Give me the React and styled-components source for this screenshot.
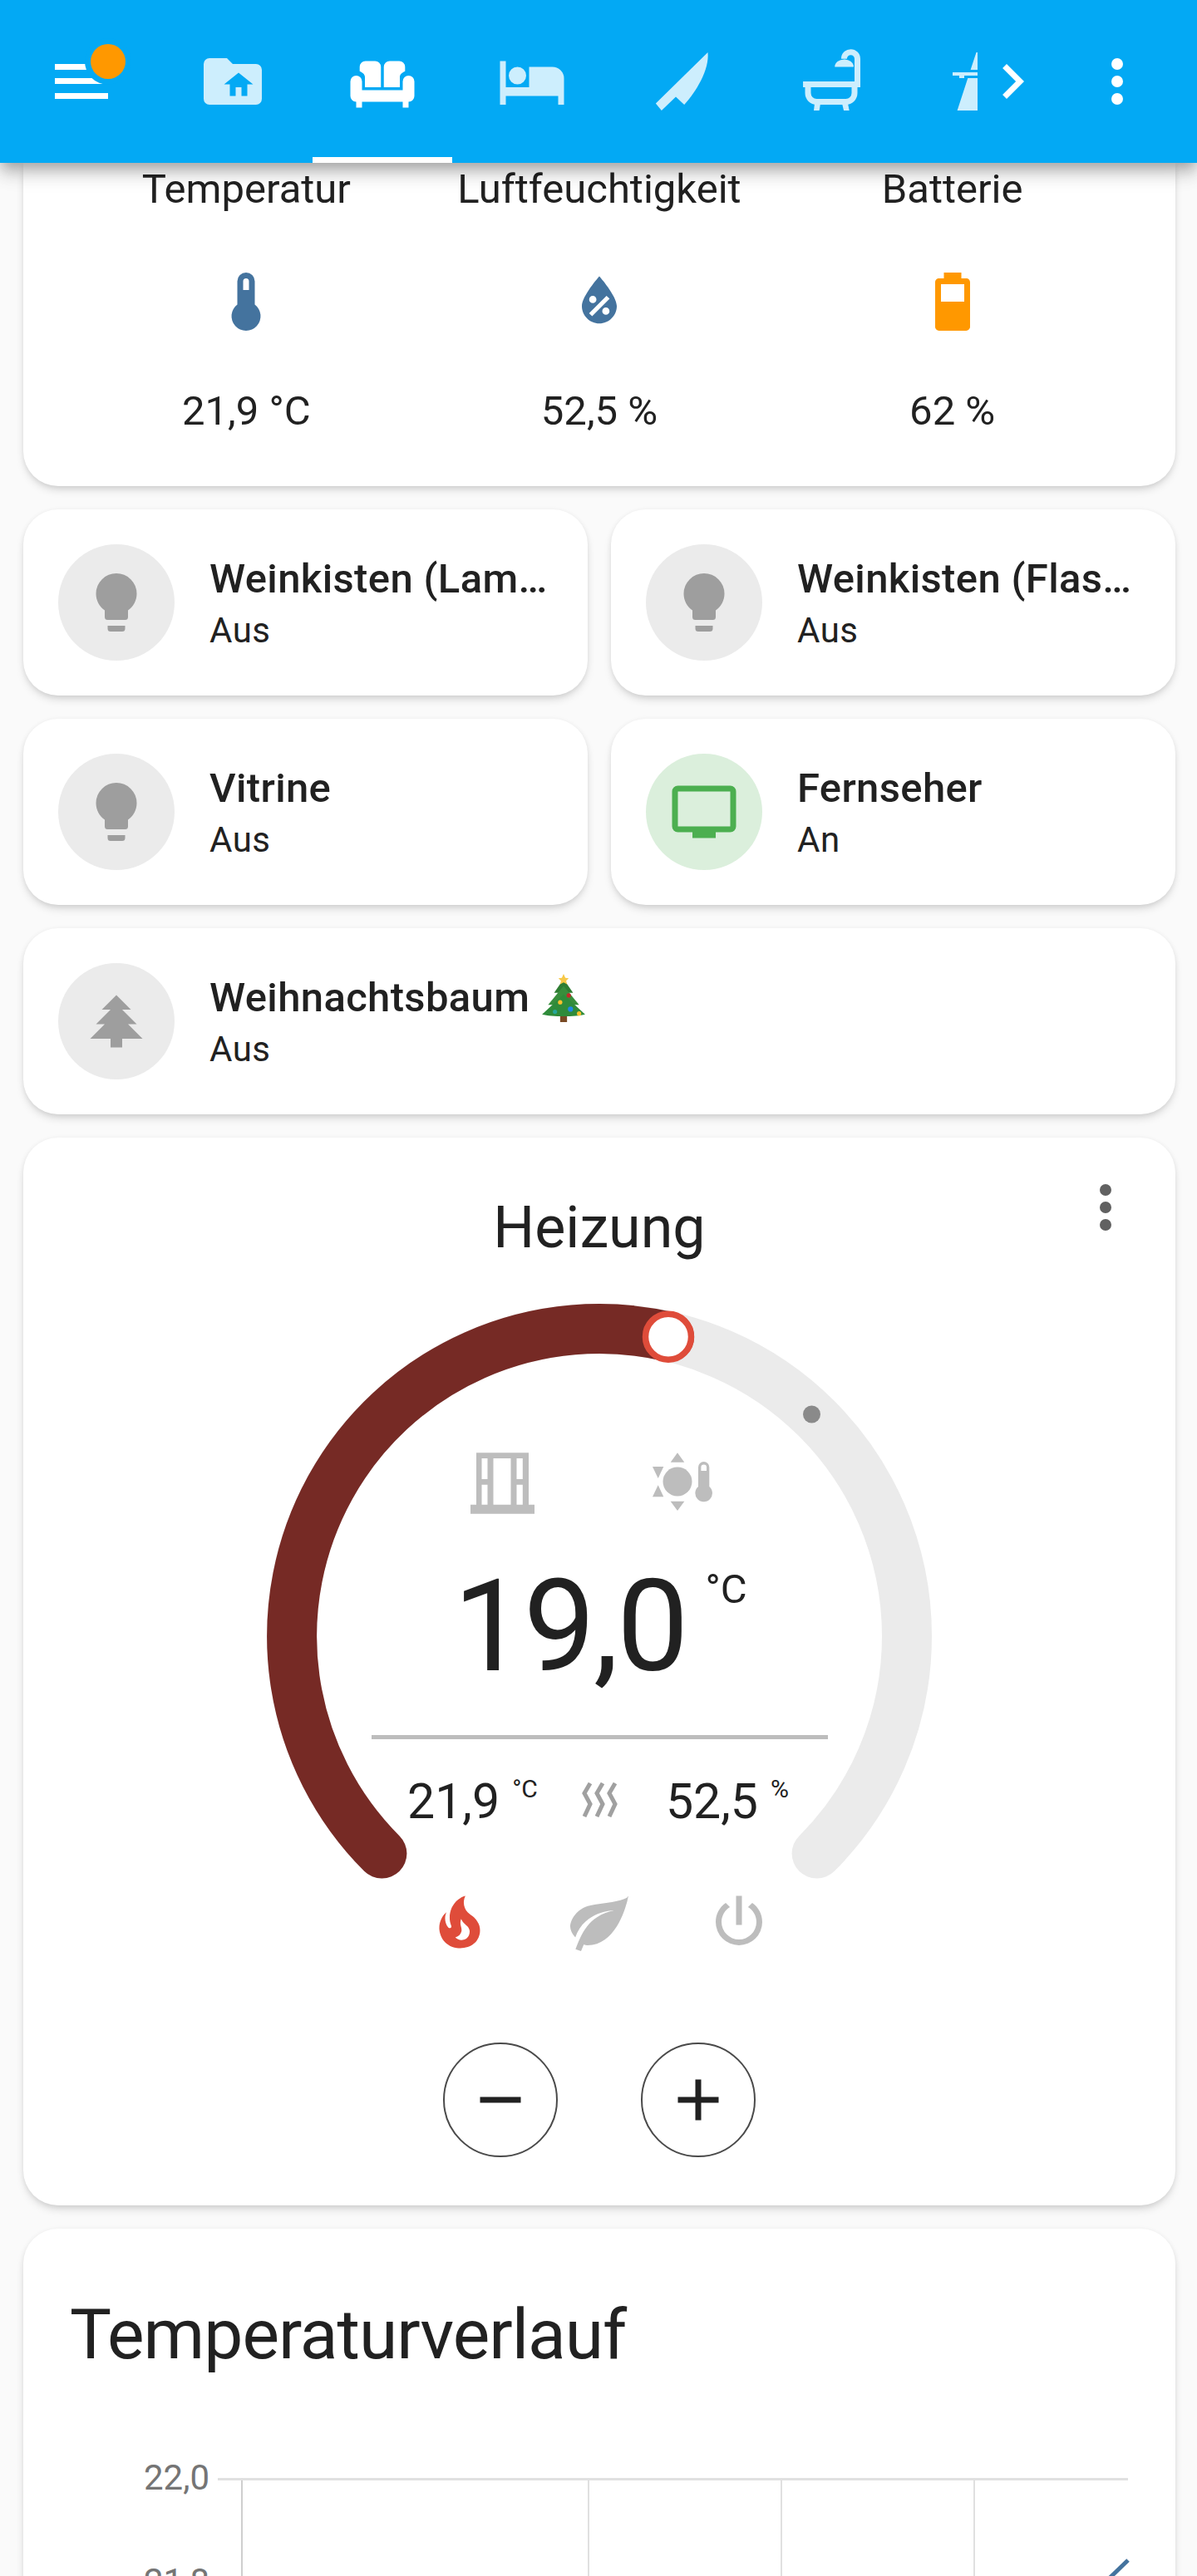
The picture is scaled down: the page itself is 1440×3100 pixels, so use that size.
import React from 'react'
import styled, { createGlobalStyle } from 'styled-components'

const Global = createGlobalStyle`
  html, body {
    margin: 0;
    padding: 0;
    background: #fafafa;
    font-family: Roboto, "Liberation Sans", sans-serif;
    color: #212121;
  }
  * { box-sizing: border-box; }
`

const Page = styled.div`
  width: 1440px;
  height: 3100px;
  overflow: hidden;
  background: #fafafa;
`

const Header = styled.header`
  position: relative;
  z-index: 2;
  display: flex;
  align-items: center;
  height: 196px;
  background: #03a9f4;
  box-shadow: 0 7px 14px -3.5px rgba(0,0,0,.2), 0 14px 17.5px rgba(0,0,0,.14), 0 3.5px 35px rgba(0,0,0,.12);
`

const MenuButton = styled.div`
  width: 190px;
  padding-left: 56px;
  display: flex;
`

const Tabs = styled.nav`
  display: flex;
  width: 986px;
  height: 196px;
  overflow: hidden;
`

const Tab = styled.div`
  position: relative;
  flex: 0 0 180px;
  display: flex;
  align-items: center;
  justify-content: center;
  color: ${p => (p.$active ? '#fff' : '#cdeefd')};
  ${p => p.$active && `
    &::after {
      content: '';
      position: absolute;
      left: 6px;
      right: 6px;
      bottom: 0;
      height: 7px;
      background: #fff;
    }
  `}
`

const Scroll = styled.div`
  display: flex;
  color: #fff;
`

const HeaderDots = styled.div`
  display: flex;
  margin-left: 41.5px;
  color: #fff;
`

const Icon = styled.svg`
  display: block;
  flex: none;
  width: ${p => p.$size || 84}px;
  height: ${p => p.$size || 84}px;
  fill: currentColor;
  color: ${p => p.$color || 'inherit'};
  overflow: visible;
`

const Main = styled.main`
  display: flex;
  flex-direction: column;
  gap: 28px;
  padding: 0 26px 0 28px;
`

const Card = styled.section`
  position: relative;
  background: #fff;
  border-radius: 42px;
  box-shadow: 0 6px 12px -3px rgba(0,0,0,.18), 0 1px 6px rgba(0,0,0,.06);
`

const GlanceCard = styled(Card)`
  display: grid;
  grid-template-columns: repeat(3, 1fr);
  padding: 7px 56px 66px;
  border-radius: 0 0 42px 42px;
`

const GlanceItem = styled.div`
  display: flex;
  flex-direction: column;
  align-items: center;
  font-size: 49px;
  line-height: 49px;
`

const GlanceIcon = styled.div`
  margin: 69px 0 65px;
`

const TileGrid = styled.div`
  display: grid;
  grid-template-columns: 1fr 1fr;
  gap: 28px;
`

const Tile = styled(Card)`
  display: flex;
  align-items: center;
  gap: 42px;
  height: 224px;
  padding: 0 42px;
  min-width: 0;
  grid-column: ${p => (p.$wide ? '1 / -1' : 'auto')};
`

const Shape = styled.div`
  flex: none;
  width: 140px;
  height: 140px;
  border-radius: 50%;
  display: flex;
  align-items: center;
  justify-content: center;
  background: ${p => (p.$on ? '#dbefdc' : '#ebebeb')};
  color: ${p => (p.$on ? '#4caf50' : '#9e9e9e')};
`

const TileText = styled.div`
  min-width: 0;
  flex: 1;
`

const TileName = styled.div`
  font-size: 49px;
  font-weight: 500;
  line-height: 68px;
  letter-spacing: .35px;
  white-space: nowrap;
  overflow: hidden;
  text-overflow: ellipsis;
`

const Emoji = styled.svg`
  display: inline-block;
  width: 56px;
  height: 58px;
  margin-left: 13px;
  vertical-align: -13px;
`

const TileState = styled.div`
  font-size: 42px;
  line-height: 56px;
  letter-spacing: .5px;
`

const ThermostatCard = styled(Card)`
  display: flex;
  flex-direction: column;
  align-items: center;
  padding: 66px 0 58px;
`

const CardMenu = styled.div`
  position: absolute;
  top: 42px;
  right: 42px;
  color: #616161;
`

const ThermostatTitle = styled.h2`
  margin: 0 0 50px;
  font-size: 70px;
  font-weight: 400;
  line-height: 84px;
`

const Dial = styled.div`
  position: relative;
  width: 800px;
  height: 691px;
`

const Ring = styled.svg`
  display: block;
  width: 800px;
  height: 691px;
  overflow: visible;
`

const DialCenter = styled.div`
  position: absolute;
  inset: 0;
  display: flex;
  flex-direction: column;
  align-items: center;
  padding-top: 174px;
`

const DialIcons = styled.div`
  display: flex;
  gap: 133px;
  padding-right: 18px;
  color: #bdbdbd;
`

const BigTemp = styled.div`
  display: flex;
  margin-top: 54px;
  padding-left: 2px;
  font-size: 154px;
  line-height: 154px;
  letter-spacing: -2.2px;
`

const BigUnit = styled.span`
  margin: 7px 0 0 22px;
  font-size: 49px;
  line-height: 49px;
  letter-spacing: 0;
`

const Divider = styled.div`
  width: 549px;
  height: 5px;
  margin-top: 53px;
  background: #bdbdbd;
`

const Readings = styled.div`
  display: flex;
  align-items: flex-start;
  gap: 54px;
  margin-top: 45px;
  padding-right: 3px;
`

const Reading = styled.div`
  display: flex;
  font-size: 59px;
  line-height: 59px;
`

const ReadingUnit = styled.span`
  margin: 0 0 0 15px;
  font-size: 30px;
  line-height: 30px;
`

const HeatWave = styled.svg`
  display: block;
  width: 46px;
  height: 42px;
  margin: 7px 2px 0 -2px;
  fill: none;
  stroke: #a0a0a0;
  stroke-width: 5;
`

const Modes = styled.div`
  display: flex;
  margin-top: 11px;
`

const Mode = styled.div`
  width: 168px;
  display: flex;
  justify-content: center;
  color: ${p => (p.$active ? '#df4c3a' : '#bdbdbd')};
`

const Stepper = styled.div`
  display: flex;
  gap: 100px;
  margin-top: 103px;
`

const StepButton = styled.div`
  width: 138px;
  height: 138px;
  border-radius: 50%;
  border: 2.5px solid #4a4a4a;
  display: flex;
  align-items: center;
  justify-content: center;
  color: #212121;
`

const GraphCard = styled(Card)`
  height: 700px;
  padding-top: 86px;
`

const GraphTitle = styled.h2`
  margin: 0 0 0 56px;
  font-size: 84px;
  font-weight: 400;
  line-height: 84px;
  letter-spacing: -1px;
`

const Chart = styled.svg`
  display: block;
  width: 1384px;
  height: 300px;
  margin-top: 97px;
`

const ChartLabel = styled.text`
  font-family: Roboto, "Liberation Sans", sans-serif;
  font-size: 42px;
  fill: #757575;
  text-anchor: end;
`

const paths = {
  folderHome: 'M20,6H12L10,4H4A2,2 0 0,0 2,6V18A2,2 0 0,0 4,20H20A2,2 0 0,0 22,18V8A2,2 0 0,0 20,6M17,13V17H15V14H13V17H11V13H9L14,9L19,13H17Z',
  sofa: 'M3 10a2 2 0 0 1 2 2v3h14v-3a2 2 0 0 1 4 0v5a2 2 0 0 1-2 2v2h-2v-2H5v2H3v-2a2 2 0 0 1-2-2v-5a2 2 0 0 1 2-2zM6 14v-3.5c0-1-.9-1.6-1.8-2V7a2 2 0 0 1 2-2h3.3a2 2 0 0 1 2 2v7zM18 14v-3.5c0-1 .9-1.6 1.8-2V7a2 2 0 0 0-2-2h-3.3a2 2 0 0 0-2 2v7z',
  bed: 'M19,7H11V14H3V5H1V20H3V17H21V20H23V11A4,4 0 0,0 19,7M7,13A3,3 0 0,0 10,10A3,3 0 0,0 7,7A3,3 0 0,0 4,10A3,3 0 0,0 7,13Z',
  knife: 'M21 2C21.6 8 17 15.500 12.900 20L10 17.300L5.100 22L3.100 19.600Z',
  chevron: 'M8.59,16.58L13.17,12L8.59,7.41L10,6L16,12L10,18L8.59,16.58Z',
  dots: 'M12,16A2,2 0 0,1 14,18A2,2 0 0,1 12,20A2,2 0 0,1 10,18A2,2 0 0,1 12,16M12,10A2,2 0 0,1 14,12A2,2 0 0,1 12,14A2,2 0 0,1 10,12A2,2 0 0,1 12,10M12,4A2,2 0 0,1 14,6A2,2 0 0,1 12,8A2,2 0 0,1 10,6A2,2 0 0,1 12,4Z',
  thermometer: 'M15 13V5A3 3 0 0 0 9 5V13A5 5 0 1 0 15 13M12 4A1 1 0 0 1 13 5V8H11V5A1 1 0 0 1 12 4Z',
  waterPercent: 'M12,3.25C12,3.25 6,10 6,13.5C6,16.81 8.69,19.5 12,19.5C15.31,19.5 18,16.81 18,13.5C18,10 12,3.25 12,3.25M14.47,9.97L15.53,11.03L9.53,17.03L8.47,15.97M9.75,10A1.25,1.25 0 0,1 11,11.25A1.25,1.25 0 0,1 9.75,12.5A1.25,1.25 0 0,1 8.5,11.25A1.25,1.25 0 0,1 9.75,10M14.25,14A1.25,1.25 0 0,1 15.5,15.25A1.25,1.25 0 0,1 14.25,16.5A1.25,1.25 0 0,1 13,15.25A1.25,1.25 0 0,1 14.25,14Z',
  battery: 'M16 12H8V6H16M16.67 4H15V2H9V4H7.33C6.6 4 6 4.6 6 5.33V20.67C6 21.4 6.6 22 7.33 22H16.67C17.4 22 18 21.4 18 20.67V5.33C18 4.6 17.4 4 16.67 4Z',
  bulb: 'M12,2A7,7 0 0,0 5,9C5,11.38 6.19,13.47 8,14.74V17A1,1 0 0,0 9,18H15A1,1 0 0,0 16,17V14.74C17.81,13.47 19,11.38 19,9A7,7 0 0,0 12,2M9,21A1,1 0 0,0 10,22H14A1,1 0 0,0 15,21V20H9V21Z',
  tv: 'M21,17H3V5H21M21,3H3A2,2 0 0,0 1,5V17A2,2 0 0,0 3,19H8V21H16V19H21A2,2 0 0,0 23,17V5A2,2 0 0,0 21,3Z',
  pine: 'M10,21V18H3L8,13H5L10,8H7L12,3L17,8H14L19,13H16L21,18H14V21H10Z',
  fire: 'M17.66 11.2C17.43 10.9 17.15 10.64 16.89 10.38C16.22 9.78 15.46 9.35 14.82 8.72C13.33 7.26 13 4.85 13.95 3C13 3.23 12.17 3.75 11.46 4.32C8.87 6.4 7.85 10.07 9.07 13.22C9.11 13.32 9.15 13.42 9.15 13.55C9.15 13.77 9 13.97 8.8 14.05C8.57 14.15 8.33 14.09 8.14 13.93C8.08 13.88 8.04 13.83 8 13.76C6.87 12.33 6.69 10.28 7.45 8.64C5.78 10 4.87 12.3 5 14.47C5.06 14.97 5.12 15.47 5.29 15.97C5.43 16.57 5.7 17.17 6 17.7C7.08 19.43 8.95 20.67 10.96 20.92C13.1 21.19 15.39 20.8 17.03 19.32C18.86 17.66 19.5 15 18.56 12.72L18.43 12.46C18.22 12 17.66 11.2 17.66 11.2M14.5 17.5C14.22 17.74 13.76 18 13.4 18.1C12.28 18.5 11.16 17.94 10.5 17.28C11.69 17 12.4 16.12 12.61 15.23C12.78 14.43 12.46 13.77 12.33 13C12.21 12.26 12.23 11.63 12.5 10.94C12.69 11.32 12.89 11.7 13.13 12C13.9 13 15.11 13.44 15.37 14.8C15.41 14.94 15.43 15.08 15.43 15.23C15.46 16.05 15.1 16.95 14.5 17.5H14.5Z',
  leaf: 'M17,8C8,10 5.9,16.17 3.82,21.34L5.71,22L6.66,19.7C7.14,19.87 7.64,20 8,20C19,20 22,3 22,3C21,5 14,5.25 9,6.25C4,7.25 2,11.5 2,13.5C2,15.5 3.75,17.25 3.75,17.25C7,8 17,8 17,8Z',
  power: 'M16.56,5.44L15.11,6.89C16.84,7.94 18,9.83 18,12A6,6 0 0,1 12,18A6,6 0 0,1 6,12C6,9.83 7.16,7.94 8.88,6.88L7.44,5.44C5.36,6.88 4,9.28 4,12A8,8 0 0,0 12,20A8,8 0 0,0 20,12C20,9.28 18.64,6.88 16.56,5.44M13,3H11V13H13',
  minus: 'M19,13H5V11H19V13Z',
  plus: 'M19,13H13V19H11V13H5V11H11V5H13V11H19V13Z',
}

const Mdi = ({ d, size, color }) => (
  <Icon viewBox="0 0 24 24" $size={size} $color={color}>
    <path d={d} />
  </Icon>
)

const MenuIcon = () => (
  <Icon viewBox="0 0 84 84" $color="#fff">
    <rect x="10" y="21" width="64" height="7" />
    <rect x="10" y="38" width="64" height="7" />
    <rect x="10" y="56" width="64" height="7" />
    <circle cx="74" cy="18" r="28" fill="#03a9f4" />
    <circle cx="74" cy="18" r="21" fill="#ff9800" />
  </Icon>
)

const BathIcon = () => (
  <Icon viewBox="0 0 24 24">
    <rect x="2.300" y="12" width="19.700" height="2" />
    <path d="M21 12V4.200a2.300 2.300 0 0 0-4.600 0" fill="none" stroke="currentColor" strokeWidth="2" />
    <path d="M13.200 7a3.250 2.600 0 0 1 6.500 0z" />
    <path d="M4 14v2a3 3 0 0 0 3 3h10a3 3 0 0 0 3-3v-2" fill="none" stroke="currentColor" strokeWidth="2" />
    <path d="M6.300 19.500h2L7.900 22H6zM15.700 19.500h2L18.200 22h-1.900z" />
  </Icon>
)

// the tab behind the arrow is cut off by the scroller
const ClippedIcon = () => (
  <Icon viewBox="0 0 84 84">
    <path d="M36.500 7L38 7V28H29.600zM26.300 38H38V77H13.600z" />
    <rect x="8" y="31" width="30" height="4" />
    <rect x="16" y="35" width="6" height="3" />
  </Icon>
)

const WindowIcon = () => (
  <Icon viewBox="0 0 84 84">
    <path
      fillRule="evenodd"
      d="M11 5.300H74V67.700H81V78.700H4V67.700H11ZM17.500 12V37H24.500V12ZM17.500 43.700V67.700H24.500V43.700ZM31.500 12V67.700H52.500V12ZM59.500 12V37H66.800V12ZM59.500 43.700V67.700H66.800V43.700Z"
    />
  </Icon>
)

const SunThermoIcon = () => (
  <Icon viewBox="0 0 84 84">
    <circle cx="36" cy="40" r="17.500" />
    <path d="M36 5.300L44.300 16.700H27.700ZM36 75L27.700 63.700H44.300ZM6 22H19.300L12.700 36ZM12.700 44.300L19.300 58.300H6Z" />
    <path
      fillRule="evenodd"
      d="M61 22.700a6.650 6.650 0 0 1 13.300 0V46a10.300 10.300 0 1 1-13.300 0ZM64.400 27H71V22.700a3.300 3.300 0 0 0-6.600 0Z"
    />
  </Icon>
)

const TreeEmoji = () => (
  <Emoji viewBox="0 0 52 56">
    <rect x="22" y="47" width="8" height="9" fill="#7a4a24" />
    <path d="M26 6L37 22H15Z" fill="#2e7d32" />
    <path d="M26 14L44 36H8Z" fill="#388e3c" />
    <path d="M26 24L51 47C40 50 12 50 1 47Z" fill="#2e8b3a" />
    <path d="M26 0L28 4.500L32 5L29 8L30 12L26 10L22 12L23 8L20 5L24 4.500Z" fill="#f7c948" />
    <circle cx="32" cy="25" r="2.500" fill="#c62828" />
    <circle cx="22" cy="33" r="2.500" fill="#fbc02d" />
    <circle cx="34" cy="41" r="3" fill="#1e88e5" />
    <circle cx="16" cy="44" r="2.500" fill="#26a69a" />
    <circle cx="44" cy="46" r="2.500" fill="#fbc02d" />
  </Emoji>
)

const tiles = [
  { name: 'Weinkisten (Lampen)', state: 'Aus', icon: paths.bulb },
  { name: 'Weinkisten (Flaschen)', state: 'Aus', icon: paths.bulb },
  { name: 'Vitrine', state: 'Aus', icon: paths.bulb },
  { name: 'Fernseher', state: 'An', icon: paths.tv, on: true },
]

const App = () => {
  return (
    <Page>
      <Global />
      <Header>
        <MenuButton><MenuIcon /></MenuButton>
        <Tabs>
          <Tab><Mdi d={paths.folderHome} /></Tab>
          <Tab $active><Mdi d={paths.sofa} /></Tab>
          <Tab><Mdi d={paths.bed} /></Tab>
          <Tab><Mdi d={paths.knife} /></Tab>
          <Tab><BathIcon /></Tab>
          <Tab><ClippedIcon /></Tab>
        </Tabs>
        <Scroll><Mdi d={paths.chevron} /></Scroll>
        <HeaderDots><Mdi d={paths.dots} /></HeaderDots>
      </Header>
      <Main>
        <GlanceCard>
          <GlanceItem>
            Temperatur
            <GlanceIcon><Mdi d={paths.thermometer} color="#44739e" /></GlanceIcon>
            21,9 °C
          </GlanceItem>
          <GlanceItem>
            Luftfeuchtigkeit
            <GlanceIcon><Mdi d={paths.waterPercent} color="#44739e" /></GlanceIcon>
            52,5 %
          </GlanceItem>
          <GlanceItem>
            Batterie
            <GlanceIcon><Mdi d={paths.battery} color="#ff9800" /></GlanceIcon>
            62 %
          </GlanceItem>
        </GlanceCard>

        <TileGrid>
          {tiles.map(t => (
            <Tile key={t.name}>
              <Shape $on={t.on}><Mdi d={t.icon} /></Shape>
              <TileText>
                <TileName>{t.name}</TileName>
                <TileState>{t.state}</TileState>
              </TileText>
            </Tile>
          ))}
          <Tile $wide>
            <Shape><Mdi d={paths.pine} /></Shape>
            <TileText>
              <TileName>Weihnachtsbaum<TreeEmoji /></TileName>
              <TileState>Aus</TileState>
            </TileText>
          </Tile>
        </TileGrid>

        <ThermostatCard>
          <CardMenu><Mdi d={paths.dots} /></CardMenu>
          <ThermostatTitle>Heizung</ThermostatTitle>
          <Dial>
            <Ring viewBox="0 0 800 691" fill="none" strokeLinecap="round" strokeWidth="60">
              <path d="M138.400 661.600A370 370 0 1 1 661.600 661.600" stroke="#ebebeb" />
              <path d="M138.400 661.600A370 370 0 0 1 484 39.700" stroke="#762a25" />
              <circle cx="483" cy="39.700" r="27.500" fill="#fff" stroke="#df4c3a" strokeWidth="7.500" />
              <circle cx="655.500" cy="133" r="10.500" fill="#8a8a8a" stroke="none" />
            </Ring>
            <DialCenter>
              <DialIcons>
                <WindowIcon />
                <SunThermoIcon />
              </DialIcons>
              <BigTemp>19,0<BigUnit>°C</BigUnit></BigTemp>
              <Divider />
              <Readings>
                <Reading>21,9<ReadingUnit>°C</ReadingUnit></Reading>
                <HeatWave viewBox="0 0 46 42">
                  <path d="M11 1L4 13L11 26L4 41" />
                  <path d="M26 1L19 13L26 26L19 41" />
                  <path d="M41 1L34 13L41 26L34 41" />
                </HeatWave>
                <Reading>52,5<ReadingUnit>%</ReadingUnit></Reading>
              </Readings>
            </DialCenter>
          </Dial>
          <Modes>
            <Mode $active><Mdi d={paths.fire} /></Mode>
            <Mode><Mdi d={paths.leaf} /></Mode>
            <Mode><Mdi d={paths.power} /></Mode>
          </Modes>
          <Stepper>
            <StepButton><Mdi d={paths.minus} /></StepButton>
            <StepButton><Mdi d={paths.plus} /></StepButton>
          </Stepper>
        </ThermostatCard>

        <GraphCard>
          <GraphTitle>Temperaturverlauf</GraphTitle>
          <Chart viewBox="0 0 1384 300">
            <ChartLabel x="224" y="47">22,0</ChartLabel>
            <ChartLabel x="224" y="172">21,8</ChartLabel>
            <path d="M234 34.500H1329" stroke="#e0e0e0" strokeWidth="3" />
            <path d="M263 36V300" stroke="#cfcfcf" strokeWidth="2" />
            <path d="M680 36V300M912 36V300M1144 36V300" stroke="#e0e0e0" strokeWidth="2" />
            <path d="M1300 160L1329 132" stroke="#44739e" strokeWidth="5" fill="none" />
          </Chart>
        </GraphCard>
      </Main>
    </Page>
  )
}

export default App
